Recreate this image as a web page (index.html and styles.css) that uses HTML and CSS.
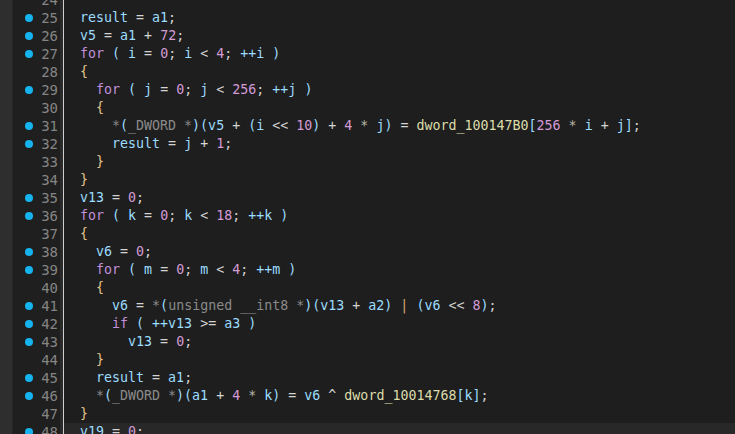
FILE: index.html
```html
<!DOCTYPE html>
<html>
<head>
<meta charset="utf-8">
<link rel="stylesheet" href="styles.css">
</head>
<body>
<div class="editor">
  <div class="strip"></div>
  <div class="gutter">
    <div class="gl"><span class="nodot"></span><span class="ln">24</span></div>
    <div class="gl"><span class="dot"></span><span class="ln">25</span></div>
    <div class="gl"><span class="dot"></span><span class="ln">26</span></div>
    <div class="gl"><span class="dot"></span><span class="ln">27</span></div>
    <div class="gl"><span class="nodot"></span><span class="ln">28</span></div>
    <div class="gl"><span class="dot"></span><span class="ln">29</span></div>
    <div class="gl"><span class="nodot"></span><span class="ln">30</span></div>
    <div class="gl"><span class="dot"></span><span class="ln">31</span></div>
    <div class="gl"><span class="dot"></span><span class="ln">32</span></div>
    <div class="gl"><span class="nodot"></span><span class="ln">33</span></div>
    <div class="gl"><span class="nodot"></span><span class="ln">34</span></div>
    <div class="gl"><span class="dot"></span><span class="ln">35</span></div>
    <div class="gl"><span class="dot"></span><span class="ln">36</span></div>
    <div class="gl"><span class="nodot"></span><span class="ln">37</span></div>
    <div class="gl"><span class="dot"></span><span class="ln">38</span></div>
    <div class="gl"><span class="dot"></span><span class="ln">39</span></div>
    <div class="gl"><span class="nodot"></span><span class="ln">40</span></div>
    <div class="gl"><span class="dot"></span><span class="ln">41</span></div>
    <div class="gl"><span class="dot"></span><span class="ln">42</span></div>
    <div class="gl"><span class="dot"></span><span class="ln">43</span></div>
    <div class="gl"><span class="nodot"></span><span class="ln">44</span></div>
    <div class="gl"><span class="dot"></span><span class="ln">45</span></div>
    <div class="gl"><span class="dot"></span><span class="ln">46</span></div>
    <div class="gl"><span class="nodot"></span><span class="ln">47</span></div>
    <div class="gl"><span class="dot"></span><span class="ln">48</span></div>
  </div>
  <div class="sep"></div>
  <div class="code">
<div class="cl"> </div>
<div class="cl"><span class="v">result</span> <span class="o">=</span> <span class="v">a1</span><span class="s">;</span></div>
<div class="cl"><span class="v">v5</span> <span class="o">=</span> <span class="v">a1</span> <span class="o">+</span> <span class="n">72</span><span class="s">;</span></div>
<div class="cl"><span class="k">for</span> <span class="v">(</span> <span class="v">i</span> <span class="o">=</span> <span class="n">0</span><span class="s">;</span> <span class="v">i</span> <span class="o">&lt;</span> <span class="n">4</span><span class="s">;</span> <span class="v">++i</span> <span class="v">)</span></div>
<div class="cl"><span class="b">{</span></div>
<div class="cl">  <span class="k">for</span> <span class="v">(</span> <span class="v">j</span> <span class="o">=</span> <span class="n">0</span><span class="s">;</span> <span class="v">j</span> <span class="o">&lt;</span> <span class="n">256</span><span class="s">;</span> <span class="v">++j</span> <span class="v">)</span></div>
<div class="cl">  <span class="b">{</span></div>
<div class="cl">    <span class="t">*</span><span class="v">(</span><span class="t">_DWORD *</span><span class="v">)(v5</span> <span class="o">+</span> <span class="v">(i</span> <span class="o">&lt;&lt;</span> <span class="n">10</span><span class="v">)</span> <span class="o">+</span> <span class="n">4</span> <span class="a">*</span> <span class="v">j)</span> <span class="o">=</span> <span class="f">dword_100147B0</span><span class="v">[</span><span class="n">256</span> <span class="a">*</span> <span class="v">i</span> <span class="o">+</span> <span class="v">j]</span><span class="s">;</span></div>
<div class="cl">    <span class="v">result</span> <span class="o">=</span> <span class="v">j</span> <span class="o">+</span> <span class="n">1</span><span class="s">;</span></div>
<div class="cl">  <span class="b">}</span></div>
<div class="cl"><span class="b">}</span></div>
<div class="cl"><span class="v">v13</span> <span class="o">=</span> <span class="n">0</span><span class="s">;</span></div>
<div class="cl"><span class="k">for</span> <span class="v">(</span> <span class="v">k</span> <span class="o">=</span> <span class="n">0</span><span class="s">;</span> <span class="v">k</span> <span class="o">&lt;</span> <span class="n">18</span><span class="s">;</span> <span class="v">++k</span> <span class="v">)</span></div>
<div class="cl"><span class="b">{</span></div>
<div class="cl">  <span class="v">v6</span> <span class="o">=</span> <span class="n">0</span><span class="s">;</span></div>
<div class="cl">  <span class="k">for</span> <span class="v">(</span> <span class="v">m</span> <span class="o">=</span> <span class="n">0</span><span class="s">;</span> <span class="v">m</span> <span class="o">&lt;</span> <span class="n">4</span><span class="s">;</span> <span class="v">++m</span> <span class="v">)</span></div>
<div class="cl">  <span class="b">{</span></div>
<div class="cl">    <span class="v">v6</span> <span class="o">=</span> <span class="t">*</span><span class="v">(</span><span class="t">unsigned __int8 *</span><span class="v">)(v13</span> <span class="o">+</span> <span class="v">a2)</span> <span class="p">|</span> <span class="v">(v6</span> <span class="o">&lt;&lt;</span> <span class="n">8</span><span class="v">)</span><span class="s">;</span></div>
<div class="cl">    <span class="k">if</span> <span class="v">(</span> <span class="v">++v13</span> <span class="o">&gt;=</span> <span class="v">a3</span> <span class="v">)</span></div>
<div class="cl">      <span class="v">v13</span> <span class="o">=</span> <span class="n">0</span><span class="s">;</span></div>
<div class="cl">  <span class="b">}</span></div>
<div class="cl">  <span class="v">result</span> <span class="o">=</span> <span class="v">a1</span><span class="s">;</span></div>
<div class="cl">  <span class="t">*</span><span class="v">(</span><span class="t">_DWORD *</span><span class="v">)(a1</span> <span class="o">+</span> <span class="n">4</span> <span class="a">*</span> <span class="v">k)</span> <span class="o">=</span> <span class="v">v6</span> <span class="o">^</span> <span class="f">dword_10014768</span><span class="v">[k]</span><span class="s">;</span></div>
<div class="cl"><span class="b">}</span></div>
<div class="cl cur"><span class="v">v19</span> <span class="o">=</span> <span class="n">0</span><span class="s">;</span></div>
  </div>
</div>
</body>
</html>
```
FILE: styles.css
```css
html, body {
  margin: 0;
  padding: 0;
  height: 100%;
  overflow: hidden;
  background: #1e1e1e;
}
.editor {
  display: flex;
  height: 434px;
  overflow: hidden;
  font-family: "DejaVu Sans Mono", monospace;
  font-size: 13.3px;
}
.strip {
  width: 12px;
  flex: none;
  background: #2e2e2e;
  border-right: 1px solid #252526;
}
.gutter {
  width: 45px;
  flex: none;
  margin-top: -9px;
  padding-right: 2px;
  background: #1f1f1f;
}
.gl {
  height: 18px;
  display: flex;
  align-items: center;
  justify-content: space-between;
  padding-left: 12px;
}
.dot, .nodot {
  width: 8px;
  height: 8px;
  border-radius: 50%;
}
.dot { background: #15b4ee; }
.ln {
  color: #858585;
  line-height: 18px;
  font-size: 14px;
}
.sep {
  width: 3px;
  flex: none;
  background: #2a2a2a;
  border-right: 1px solid #cfcfcf;
}
.code {
  flex: 1;
  margin-top: -9px;
  color: #d4d4d4;
}
.cl {
  height: 18px;
  line-height: 18px;
  padding-left: 16px;
  white-space: pre;
}
.cur { background: #282828; }
.v { color: #9cdcfe; }
.k { color: #c28fdb; }
.n { color: #d49bd6; }
.b { color: #e0c48c; }
.o { color: #d4d4d4; }
.s { color: #d4d4d4; }
.t { color: #8a8a8a; }
.a { color: #b8b8a8; }
.f { color: #dcdcaa; }
.p { color: #d7a86e; }
```
